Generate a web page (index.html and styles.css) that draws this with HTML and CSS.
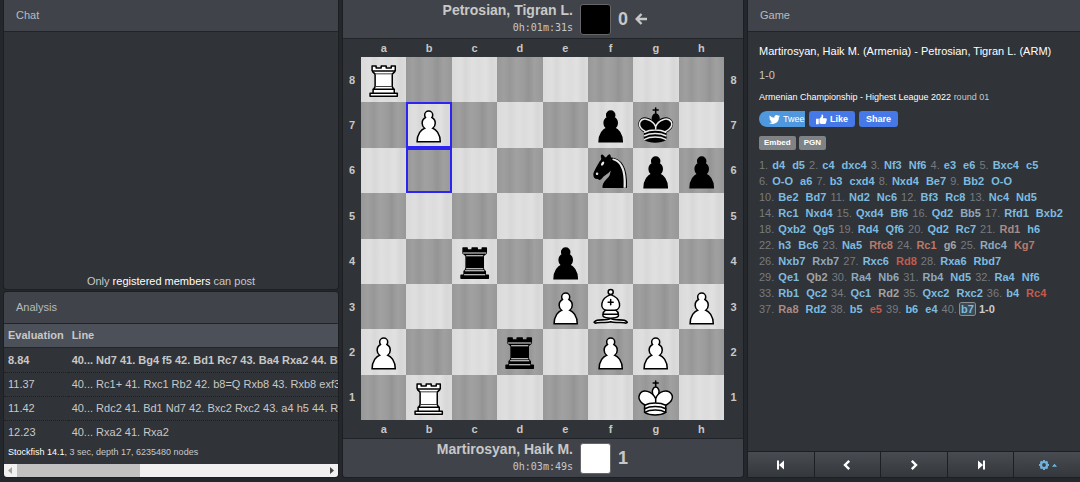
FILE: index.html
```html
<!DOCTYPE html>
<html lang="en">
<head>
<meta charset="utf-8">
<title>Martirosyan, Haik M. - Petrosian, Tigran L.</title>
<link rel="stylesheet" href="styles.css">
</head>
<body>
<svg class="sprites" aria-hidden="true">
  <symbol id="wp" viewBox="0 0 45 45"><path fill="#fff" stroke="#000" stroke-width="1.5" stroke-linecap="round" d="M22.5 9c-2.21 0-4 1.79-4 4 0 .89.29 1.71.78 2.38C17.33 16.5 16 18.59 16 21c0 2.03.94 3.84 2.41 5.03-3 1.06-7.41 5.55-7.41 13.47h23c0-7.92-4.41-12.41-7.41-13.47 1.47-1.19 2.41-3 2.41-5.03 0-2.41-1.33-4.5-3.28-5.62.49-.67.78-1.49.78-2.38 0-2.21-1.79-4-4-4z"/></symbol>
  <symbol id="bp" viewBox="0 0 45 45"><path fill="#000" stroke="#000" stroke-width="1.5" stroke-linecap="round" d="M22.5 9c-2.21 0-4 1.79-4 4 0 .89.29 1.71.78 2.38C17.33 16.5 16 18.59 16 21c0 2.03.94 3.84 2.41 5.03-3 1.06-7.41 5.55-7.41 13.47h23c0-7.92-4.41-12.41-7.41-13.47 1.47-1.19 2.41-3 2.41-5.03 0-2.41-1.33-4.5-3.28-5.62.49-.67.78-1.49.78-2.38 0-2.21-1.79-4-4-4z"/></symbol>
  <symbol id="wr" viewBox="0 0 45 45"><g fill="#fff" stroke="#000" stroke-width="1.5" stroke-linejoin="round"><path d="M9 39h27v-3H9v3zM12 36v-4h21v4H12zM11 14V9h4v2h5V9h5v2h5V9h4v5"/><path d="M34 14l-3 3H14l-3-3"/><path d="M31 17v12.5H14V17"/><path d="M31 29.5l1.5 2.5h-20l1.5-2.5"/><path fill="none" d="M11 14h23"/></g></symbol>
  <symbol id="br" viewBox="0 0 45 45"><g fill="#000" stroke="#000" stroke-width="1.5" stroke-linejoin="round"><path d="M9 39h27v-3H9v3zM12.500 32l1.500-2.500h17l1.500 2.500h-20zM12 36v-4h21v4H12z"/><path d="M14 29.500v-13h17v13H14z"/><path d="M14 16.500L11 14h23l-3 2.500H14zM11 14V9h4v2h5V9h5v2h5V9h4v5H11z"/><path fill="none" stroke="#ececec" stroke-width="1" d="M12 35.500h21M13 31.500h19M14 29.500h17M14 16.500h17M11 14h23"/></g></symbol>
  <symbol id="wb" viewBox="0 0 45 45"><g fill="#fff" stroke="#000" stroke-width="1.5" stroke-linecap="round" stroke-linejoin="round"><path d="M9 36c3.390-.970 10.110.430 13.500-2 3.390 2.430 10.110 1.030 13.500 2 0 0 1.650.540 3 2-.680.970-1.650.990-3 .500-3.390-.970-10.110.460-13.500-1-3.390 1.460-10.110.030-13.500 1-1.350.490-2.320.470-3-.500 1.350-1.460 3-2 3-2z"/><path d="M15 32c2.500 2.500 12.500 2.500 15 0 .500-1.500 0-2 0-2 0-2.500-2.500-4-2.500-4 5.500-1.500 6-11.500-5-15.500-11 4-10.500 14-5 15.500 0 0-2.500 1.500-2.500 4 0 0-.500.500 0 2z"/><path d="M25 8a2.500 2.500 0 1 1-5 0 2.500 2.500 0 1 1 5 0z"/><path fill="none" d="M17.500 26h10M15 30h15M22.500 15.500v5M20 18h5"/></g></symbol>
  <symbol id="bn" viewBox="0 0 45 45"><g fill="#000" stroke="#000" stroke-width="1.5" stroke-linecap="round" stroke-linejoin="round"><path d="M22 10c10.500 1 16.500 8 16 29H15c0-9 10-6.500 8-21"/><path d="M24 18c.380 2.910-5.550 7.370-8 9-3 2-2.820 4.340-5 4-1.042-.940 1.410-3.040 0-3-1 0 .190 1.230-1 2-1 0-4.003 1-4-4 0-2 6-12 6-12s1.890-1.900 2-3.500c-.730-.994-.500-2-.500-3 1-1 3 2.500 3 2.500h2s.780-1.992 2.500-3c1 0 1 3 1 3"/><path fill="#ececec" stroke="#ececec" d="M9.500 25.500a.500.500 0 1 1-1 0 .500.500 0 1 1 1 0zM14.933 15.750a.500 1.500 30 1 1-.866-.500.500 1.500 30 1 1 .866.500z"/><path fill="#ececec" stroke="none" d="M24.550 10.400l-.450 1.450.500.150c3.150 1 5.650 2.490 7.900 6.750S35.750 29.060 35.250 39l-.050.500h2.250l.050-.500c.500-10.060-.880-16.850-3.250-21.340-2.370-4.490-5.790-6.640-9.190-7.160l-.510-.100z"/></g></symbol>
  <symbol id="wk" viewBox="0 0 45 45"><g fill="#fff" stroke="#000" stroke-width="1.5" stroke-linecap="round" stroke-linejoin="round"><path fill="none" d="M22.500 11.630V6M20 8h5"/><path d="M22.500 25s4.500-7.500 3-10.500c0 0-1-2.500-3-2.500s-3 2.500-3 2.500c-1.500 3 3 10.500 3 10.500"/><path d="M11.500 37c5.500 3.500 15.500 3.500 21 0v-7s9-4.500 6-10.500c-4-6.500-13.500-3.500-16 4V27v-3.500c-3.500-7.500-13-10.500-16-4-3 6 5 10 5 10V37z"/><path fill="none" d="M11.500 30c5.500-3 15.500-3 21 0M11.500 33.500c5.500-3 15.500-3 21 0M11.500 37c5.500-3 15.500-3 21 0"/></g></symbol>
  <symbol id="bk" viewBox="0 0 45 45"><g fill="#000" stroke="#000" stroke-width="1.5" stroke-linecap="round" stroke-linejoin="round"><path d="M22.500 11.630V6M20 8h5"/><path d="M22.500 25s4.500-7.500 3-10.500c0 0-1-2.500-3-2.500s-3 2.500-3 2.500c-1.500 3 3 10.500 3 10.500"/><path d="M11.500 37c5.500 3.500 15.500 3.500 21 0v-7s9-4.500 6-10.500c-4-6.500-13.500-3.500-16 4V27v-3.500c-3.500-7.500-13-10.500-16-4-3 6 5 10 5 10V37z"/><path fill="none" stroke="#ececec" d="M32 29.500s8.500-4 6.030-9.650C34.150 14 25 18 22.500 24.500v2.100-2.100C20 18 9.906 14 6.997 19.850c-2.497 5.650 4.853 9 4.853 9M11.500 30c5.500-3 15.500-3 21 0M11.500 33.500c5.500-3 15.500-3 21 0M11.500 37c5.500-3 15.500-3 21 0"/></g></symbol>
</svg>
<main class="page">
  <div class="side">
    <section class="panel chat">
      <h2 class="panel-title">Chat</h2>
      <p class="chat-note">Only <a href="#members">registered members</a> can post</p>
    </section>
    <section class="panel analysis">
      <h2 class="panel-title">Analysis</h2>
      <div class="lines">
        <table>
          <thead><tr><th class="eval">Evaluation</th><th>Line</th></tr></thead>
          <tbody>
            <tr class="best"><td>8.84</td><td>40... Nd7 41. Bg4 f5 42. Bd1 Rc7 43. Ba4 Rxa2 44. B</td></tr>
            <tr><td>11.37</td><td>40... Rc1+ 41. Rxc1 Rb2 42. b8=Q Rxb8 43. Rxb8 exf3</td></tr>
            <tr><td>11.42</td><td>40... Rdc2 41. Bd1 Nd7 42. Bxc2 Rxc2 43. a4 h5 44. R</td></tr>
            <tr><td>12.23</td><td>40... Rxa2 41. Rxa2</td></tr>
          </tbody>
        </table>
      </div>
      <p class="engine"><b>Stockfish 14.1</b>, 3 sec, depth 17, 6235480 nodes</p>
      <div class="scroll">
        <svg class="scroll-arrow" viewBox="0 0 13 13"><path fill="#a3a3a3" d="M8 3v7L4 6.500z"/></svg>
        <div class="track"><div class="thumb"></div></div>
        <svg class="scroll-arrow" viewBox="0 0 13 13"><path fill="#444" d="M5 3v7l4-3.500z"/></svg>
      </div>
    </section>
  </div>

  <section class="panel game-board">
    <header class="player">
      <div class="who"><div class="name">Petrosian, Tigran L.</div><div class="clock">0h:01m:31s</div></div>
      <span class="swatch black"></span>
      <div class="score">0 <svg class="turn" viewBox="0 0 12 12"><path fill="none" stroke="currentColor" stroke-width="2.400" d="M6.500 1L1.700 6l4.800 5M2 6h10"/></svg></div>
    </header>
    <div class="board-wrap">
      <div class="files"></div>
      <div class="ranks left"></div>
      <div class="board"></div>
      <div class="ranks right"></div>
      <div class="files"></div>
    </div>
    <footer class="player">
      <div class="who"><div class="name">Martirosyan, Haik M.</div><div class="clock">0h:03m:49s</div></div>
      <span class="swatch white"></span>
      <div class="score">1</div>
    </footer>
  </section>

  <section class="panel game">
    <h2 class="panel-title">Game</h2>
    <div class="game-body">
      <p class="players"><a href="#white">Martirosyan, Haik M.</a> (Armenia) - <a href="#black">Petrosian, Tigran L.</a> (ARM)</p>
      <p class="result">1-0</p>
      <p class="event"><a href="#event">Armenian Championship - Highest League 2022</a> round 01</p>
      <div class="social">
        <button class="tweet"><svg viewBox="0 0 24 24"><path fill="#fff" d="M24 4.600a10 10 0 0 1-2.800.8 5 5 0 0 0 2.100-2.700 10 10 0 0 1-3.100 1.200 4.900 4.900 0 0 0-8.400 4.500A14 14 0 0 1 1.700 3.200a4.900 4.900 0 0 0 1.500 6.600 5 5 0 0 1-2.200-.6 4.900 4.900 0 0 0 3.900 4.900 5 5 0 0 1-2.200.1 4.900 4.900 0 0 0 4.600 3.400A10 10 0 0 1 0 19.600 14 14 0 0 0 21.500 7.100 10 10 0 0 0 24 4.600z"/></svg>Twee</button>
        <button class="fb"><svg viewBox="0 0 16 16"><path fill="#fff" d="M0 7h4v8H0zM5 7l3-3V1.500Q8 .5 9.200.8 11 1.500 10.500 4L10 6h4.500q1.500.3 1.300 1.600L14.500 13q-.4 1.500-2 1.500H8Q6.500 14.500 5 13.500z"/></svg>Like</button>
        <button class="fb">Share</button>
      </div>
      <div class="tools"><button>Embed</button><button>PGN</button></div>
      <div class="moves"></div>
    </div>
    <nav class="controls">
      <button aria-label="First move"><svg viewBox="0 0 12 12"><path fill="#fff" d="M2 1.500h2v9H2zM9 1.500v9L4 6z"/></svg></button>
      <button aria-label="Previous move"><svg viewBox="0 0 12 12"><path fill="none" stroke="#fff" stroke-width="2.400" d="M8.200 1.800L4 6l4.200 4.200"/></svg></button>
      <button aria-label="Next move"><svg viewBox="0 0 12 12"><path fill="none" stroke="#fff" stroke-width="2.400" d="M3.800 1.800L8 6l-4.200 4.200"/></svg></button>
      <button aria-label="Last move"><svg viewBox="0 0 12 12"><path fill="#fff" d="M8 1.500h2v9H8zM3 1.500v9L8 6z"/></svg></button>
      <button aria-label="Settings"><svg viewBox="0 0 12 12"><g stroke="#6fb3de" fill="none"><circle cx="6" cy="6" r="3" stroke-width="2.200"/><path stroke-width="2" d="M6 1v1.500M6 9.500V11M1 6h1.500M9.500 6H11M2.500 2.500l1 1M8.500 8.500l1 1M9.500 2.500l-1 1M3.500 8.500l-1 1"/></g></svg><svg class="caret" viewBox="0 0 6 4"><path fill="#6fb3de" d="M0 4l3-3.500L6 4z"/></svg></button>
    </nav>
  </section>
</main>
<script src="game.js"></script>
</body>
</html>
```
FILE: styles.css
```css
* { box-sizing: border-box; }
body {
  margin: 0;
  background: #24272b;
  color: #c8c8c8;
  font: 11px/16px "Liberation Sans", Arial, sans-serif;
}
h2, p { margin: 0; font-size: 11px; font-weight: normal; }
a { color: #fff; text-decoration: none; }
button { border: 0; padding: 0; margin: 0; font-family: inherit; color: #fff; cursor: pointer; }
svg { display: block; flex-shrink: 0; }
.sprites { display: none; }

.page {
  display: grid;
  grid-template-columns: minmax(0, 334fr) minmax(0, 400fr) minmax(0, 332fr);
  gap: 5px;
  min-height: 100vh;
  padding: 0 0 5px 4px;
}
.panel {
  display: flex;
  flex-direction: column;
  min-width: 0;
  background: #303337;
  border-radius: 0 0 3px 3px;
  box-shadow: 0 0 0 1px #1d1f22;
  overflow: hidden;
}
.panel-title {
  padding: 7px 12px 8px;
  color: #b9bbbd;
  background: #40444a;
  border-bottom: 1px solid #212428;
}

.side { display: flex; flex-direction: column; gap: 3px; min-width: 0; }
.chat { flex: 1; }
.chat-note { margin-top: auto; text-align: center; }
.analysis { border-radius: 3px; }
.lines { overflow: hidden; }
table { width: 100%; border-collapse: collapse; white-space: nowrap; }
th, td { padding: 3px 0 4px 4px; text-align: left; }
.eval { padding-right: 4px; }
thead tr { background: #4c5058; border-bottom: 1px solid #212428; }
tbody tr + tr { border-top: 1px dotted #1d1f22; }
.best { font-weight: bold; }
.best td { padding-top: 4px; }
.engine { padding: 0 4px 4px; font-size: 9px; }
.engine b { color: #fff; font-weight: normal; }
.scroll { display: flex; background: #f1f1f1; }
.scroll-arrow { width: 13px; height: 13px; }
.track { flex: 1; }
.thumb { width: 40%; height: 100%; background: #c1c1c1; }

.player {
  display: grid;
  grid-template-columns: minmax(0, 230fr) 31px minmax(0, 125fr);
  column-gap: 7px;
  align-items: center;
  height: 39px;
  background: #40444a;
}
header.player { border-bottom: 1px solid #212428; }
footer.player { flex: 1; border-top: 1px solid #212428; }
.who { text-align: right; }
.name { font-size: 14px; font-weight: bold; line-height: 18px; }
.clock { font: 10px/18px "DejaVu Sans Mono", monospace; }
.swatch { height: 31px; border: 1px solid #666; border-radius: 3px; }
.black { background: #000; }
.white { background: #fff; }
.score { display: flex; align-items: center; gap: 7px; font-size: 18px; font-weight: bold; }
.turn { width: 12px; height: 12px; }

.board-wrap { display: grid; grid-template-columns: 18px minmax(0, 1fr) 19px; font-weight: bold; }
.files { grid-column: 2; display: grid; grid-template-columns: repeat(8, 1fr); text-align: center; line-height: 18px; }
.ranks { display: grid; grid-template-rows: repeat(8, 1fr); align-items: center; justify-items: center; }
.left { grid-column: 1; }
.right { grid-column: 3; }
.board {
  grid-column: 2;
  display: grid;
  grid-template: repeat(8, minmax(0, 1fr)) / repeat(8, minmax(0, 1fr));
  aspect-ratio: 1;
}
.light { background: linear-gradient(90deg, #dadada 0, #dfdfdf 20%, #d8d8d8 30%, #e0e0e0 45%, #dcdcdc 60%, #e1e1e1 75%, #d7d7d7 88%, #dcdcdc); }
.dark { background: linear-gradient(90deg, #989898 0, #9f9f9f 15%, #979797 28%, #a1a1a1 42%, #9c9c9c 58%, #949494 68%, #a0a0a0 82%, #989898); }
.board svg { width: 100%; height: 100%; }
.marked { box-shadow: inset 0 0 0 2px #2c24f0; }

.game { border-radius: 0; }
.game-body { flex: 1; padding: 11px; }
.players { color: #fff; }
.result { margin-top: 8px; }
.event { margin-top: 6px; font-size: 9px; }
.social { display: flex; gap: 4px; margin-top: 6px; }
.social button { display: flex; align-items: center; gap: 3px; height: 16px; }
.social svg { width: 11px; height: 11px; }
.social .tweet { width: 46px; padding-left: 10px; background: #4f98dd; border-radius: 8px 0 0 8px; font-size: 9px; }
.social .fb { padding: 0 7px; background: #4778e8; border-radius: 3px; font-size: 9px; font-weight: bold; }
.tools { display: flex; gap: 3px; margin: 9px 0 7px; }
.tools button { height: 14px; padding: 0 5px; background: #808386; border-radius: 2px; font-size: 8px; font-weight: bold; line-height: 14px; }
.moves { color: #777b80; }
.moves a { padding: 0 1px; font-weight: bold; color: #7dbce0; }
.moves a + a { margin-left: 2px; }
.moves .pair { display: inline-block; white-space: nowrap; }
.moves .m1 { color: #8fa9bd; }
.moves .m2 { color: #a3a3a3; }
.moves .m3 { color: #ab8a83; }
.moves .m4 { color: #b9796a; }
.moves .m5 { color: #c35b4e; }
.moves .current { background: #3d4b56; border-radius: 2px; box-shadow: 0 0 0 1px #8b9094; }
.moves b { padding-left: 1px; color: #ccc; }

.controls { display: grid; grid-template-columns: repeat(5, 1fr); gap: 1px; padding-top: 1px; background: #1d1f22; }
.controls button {
  display: flex;
  align-items: center;
  justify-content: center;
  gap: 2px;
  height: 25px;
  background: linear-gradient(#484c52, #34373b);
}
.controls svg { width: 12px; height: 12px; }
.controls .caret { width: 5px; height: 4px; }
```
FILE: game.js
```js
const position = [
  "wr . . . . . . .",
  ". wp . . . bp bk .",
  ". . . . . bn bp bp",
  ". . . . . . . .",
  ". . br . bp . . .",
  ". . . . wp wb . wp",
  "wp . . br . wp wp .",
  ". wr . . . . wk ."
];
const marked = ["1,1", "2,1"];

document.querySelector(".board").innerHTML = position.map((row, r) =>
  row.split(" ").map((piece, c) => {
    const shade = (r + c) % 2 ? "dark" : "light";
    const mark = marked.includes(r + "," + c) ? " marked" : "";
    const art = piece === "." ? "" : `<svg><use href="#${piece}"/></svg>`;
    return `<div class="${shade}${mark}">${art}</div>`;
  }).join("")).join("");

const labels = list => list.map(t => `<span>${t}</span>`).join("");
document.querySelectorAll(".files").forEach(el => { el.innerHTML = labels([..."abcdefgh"]); });
document.querySelectorAll(".ranks").forEach(el => { el.innerHTML = labels([..."87654321"]); });

// A digit after "/" grades how weak the move is; "*" is the move on the board.
const game = `d4 d5 c4 dxc4 Nf3 Nf6 e3 e6 Bxc4 c5 O-O a6 b3 cxd4 Nxd4 Be7 Bb2 O-O
Be2 Bd7 Nd2 Nc6 Bf3 Rc8 Nc4 Nd5 Rc1 Nxd4 Qxd4 Bf6 Qd2 Bb5/1 Rfd1 Bxb2
Qxb2 Qg5 Rd4 Qf6 Qd2 Rc7 Rd1/3 h6 h3 Bc6 Na5 Rfc8/4 Rc1/4 g6/2 Rdc4/1 Kg7/4
Nxb7 Rxb7/1 Rxc6 Rd8/5 Rxa6 Rbd7 Qe1 Qb2/2 Ra4/1 Nb6/1 Rb4/1 Nd5 Ra4 Nf6
Rb1 Qc2 Qc1 Rd2/2 Qxc2 Rxc2 b4 Rc4/5 Ra8/3 Rd2 b5 e5/5 b6 e4 b7/*`.split(/\s+/);

const link = token => {
  const [san, grade] = token.split("/");
  const cls = !grade ? "" : grade === "*" ? ' class="current"' : ` class="m${grade}"`;
  return `<a href="#move"${cls}>${san}</a>`;
};
const pairs = [];
for (let i = 0; i < game.length; i += 2) {
  const moves = game.slice(i, i + 2).map(link).join(" ");
  pairs.push(`<span class="pair">${i / 2 + 1}. ${moves}</span>`);
}
document.querySelector(".moves").innerHTML = pairs.join(" ") + " <b>1-0</b>";
```
